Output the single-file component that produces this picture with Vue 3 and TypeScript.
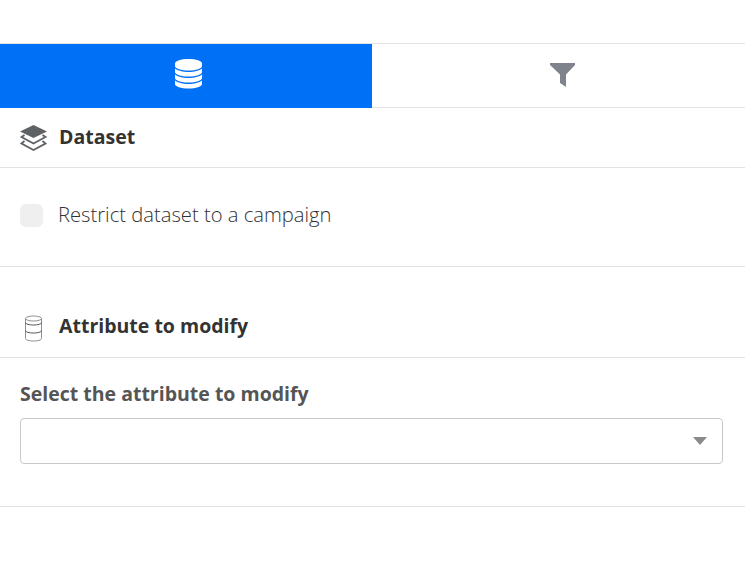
<script setup lang="ts">
import { ref } from 'vue'

const activeTab = ref('dataset')
const restricted = ref(false)
</script>

<template>
  <div class="panel">
    <div class="tabs">
      <button class="tab tab-dataset" :class="{ active: activeTab === 'dataset' }" aria-label="Dataset" @click="activeTab = 'dataset'">
        <svg width="27" height="30" viewBox="0 0 27 30" fill="currentColor">
          <path d="M13.500 0C6 0 0 2 0 4.500V7C0 9.500 6 11.500 13.500 11.500S27 9.500 27 7V4.500C27 2 21 0 13.500 0z" />
          <path d="M0 9.500V13C0 15.500 6 17.500 13.500 17.500S27 15.500 27 13V9.500C24.500 11.800 19 13 13.500 13S2.500 11.800 0 9.500z" />
          <path d="M0 15.500V19C0 21.500 6 23.500 13.500 23.500S27 21.500 27 19V15.500C24.500 17.800 19 19 13.500 19S2.500 17.800 0 15.500z" />
          <path d="M0 21.500V25C0 27.500 6 29.500 13.500 29.500S27 27.500 27 25V21.500C24.500 23.800 19 25 13.500 25S2.500 23.800 0 21.500z" />
        </svg>
      </button>
      <button class="tab tab-filter" :class="{ active: activeTab === 'filter' }" aria-label="Filter" @click="activeTab = 'filter'">
        <svg width="25" height="24" viewBox="0 0 25 24" fill="currentColor">
          <path d="M0 0h25v2l-9 9.500V24l-6-4V11.500L0 2z" />
        </svg>
      </button>
    </div>

    <div class="section-head dataset-head">
      <svg class="head-icon" width="28" height="28" viewBox="0 0 28 28">
        <path d="M13.500 1 27 7.500 13.500 14 0 7.500z" fill="#5f6265" />
        <path d="M4.500 11 1.500 13 13.500 19.500 25.500 13 22.500 11" fill="none" stroke="#5f6265" stroke-width="1.800" />
        <path d="M4.500 17 1.500 19.500 13.500 26 25.500 19.500 22.500 17" fill="none" stroke="#5f6265" stroke-width="1.800" />
      </svg>
      <h2>Dataset</h2>
    </div>

    <label class="restrict">
      <input v-model="restricted" type="checkbox" />
      <span class="box"></span>
      <span class="restrict-text">Restrict dataset to a campaign</span>
    </label>

    <div class="section-head attribute-head">
      <svg class="head-icon" width="28" height="32" viewBox="0 0 28 32" fill="none" stroke="#8f8f8f" stroke-width="1">
        <ellipse cx="13.500" cy="8.500" rx="8" ry="2.500" />
        <path d="M5.500 8.500v20c0 1.500 3.600 2.500 8 2.500s8-1 8-2.500v-20" />
        <path d="M5.500 12.500c0 1.500 3.600 2.500 8 2.500s8-1 8-2.500" stroke="#555" />
        <path d="M5.500 20.500c0 1.500 3.600 2.500 8 2.500s8-1 8-2.500" stroke="#555" />
      </svg>
      <h2>Attribute to modify</h2>
    </div>

    <div class="field">
      <div class="field-label">Select the attribute to modify</div>
      <div class="select">
        <span class="caret"></span>
      </div>
    </div>
  </div>
</template>

<style>
html,
body {
  margin: 0;
  background: #fff;
}
</style>

<style scoped>
.panel {
  width: 745px;
  height: 580px;
  padding-top: 43px;
  box-sizing: border-box;
  font-family: "Open Sans", "Liberation Sans", sans-serif;
  color: #333;
  overflow: hidden;
}

.tabs {
  display: flex;
  height: 65px;
  box-sizing: border-box;
  border-top: 1px solid #e2e2e2;
  border-bottom: 1px solid #e2e2e2;
}

.tab {
  display: flex;
  align-items: center;
  justify-content: center;
  padding: 0;
  border: 0;
  background: #fff;
  color: #7f848c;
  cursor: pointer;
}

.tab-dataset {
  width: 372px;
  padding: 0 0 5px 5px;
}

.tab-filter {
  flex: 1;
  padding: 0 0 1px 8px;
}

.tab.active {
  background: #0070f6;
  color: #fff;
  margin-bottom: -1px;
}

.section-head {
  display: flex;
  align-items: center;
  gap: 11px;
  padding-left: 20px;
  box-sizing: border-box;
  border-bottom: 1px solid #e2e2e2;
}

.section-head h2 {
  margin: 0;
  font-size: 19.500px;
  font-weight: 700;
  color: #333;
}

.dataset-head {
  height: 60px;
  padding-bottom: 2px;
}

.dataset-head .head-icon {
  margin-top: 3px;
}

.attribute-head {
  height: 91px;
  padding-top: 28px;
}

.attribute-head h2 {
  margin-bottom: 2px;
}

.restrict {
  display: flex;
  align-items: center;
  gap: 15px;
  height: 99px;
  padding: 0 20px 4px;
  box-sizing: border-box;
  border-bottom: 1px solid #e2e2e2;
  font-size: 20.200px;
  font-weight: 300;
  color: #333;
}

.restrict-text {
  margin-bottom: 2px;
}

.restrict input {
  display: none;
}

.box {
  width: 23px;
  height: 23px;
  border-radius: 6px;
  background: #efefef;
}

.field {
  height: 149px;
  box-sizing: border-box;
  padding: 23px 22px 0 20px;
  border-bottom: 1px solid #e2e2e2;
}

.field-label {
  font-size: 19.500px;
  font-weight: 700;
  line-height: 25px;
  color: #555;
  margin-bottom: 12px;
}

.select {
  position: relative;
  height: 46px;
  box-sizing: border-box;
  border: 1px solid #c8c8c8;
  border-radius: 4px;
  background: #fff;
}

.caret {
  position: absolute;
  right: 15px;
  top: 18px;
  border-left: 7.500px solid transparent;
  border-right: 7.500px solid transparent;
  border-top: 8px solid #8a8a8a;
}
</style>
